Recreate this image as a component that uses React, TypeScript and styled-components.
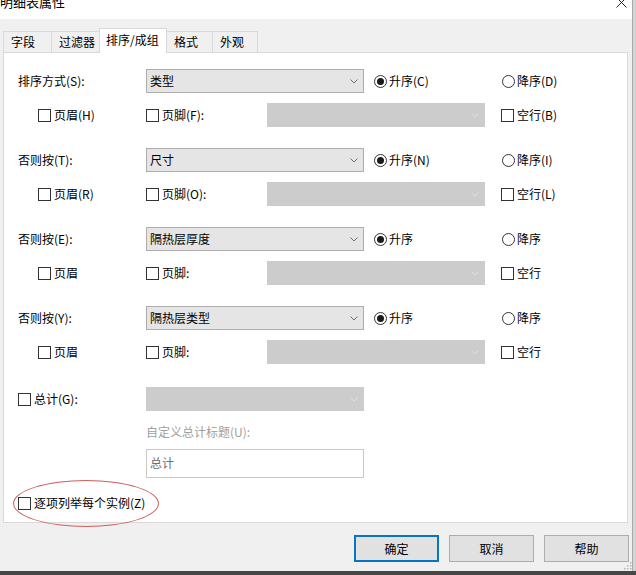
import React from 'react'
import styled, { createGlobalStyle, css } from 'styled-components'

const GlobalStyle = createGlobalStyle`
  html, body {
    margin: 0;
    padding: 0;
    background: #e6e6e6;
  }
  * {
    box-sizing: border-box;
  }
`

const FONT = `"Noto Sans CJK SC", "Noto Sans", "Liberation Sans", sans-serif`

const Screen = styled.div`
  width: 636px;
  height: 575px;
  background: #d4d4d4;
  border-bottom: 4px solid #474747;
  overflow: hidden;
  font-family: ${FONT};
  font-size: 12px;
  line-height: 16px;
  color: #000;
`

const Window = styled.div`
  width: 633px;
  height: 571px;
  background: #f0f0f0;
  border-right: 1px solid #a9a9a9;
  display: flex;
  flex-direction: column;
  position: relative;
`

const TitleBar = styled.div`
  height: 19px;
  background: #fff;
  display: flex;
  justify-content: space-between;
  align-items: flex-start;
  overflow: hidden;
`

const TitleText = styled.div`
  font-size: 13px;
  line-height: 13px;
  margin-top: -5px;
  color: #000;
`

const CloseIcon = styled.svg`
  margin-top: -3px;
  margin-right: 5px;
`

const TabStrip = styled.div`
  margin-top: 9px;
  height: 24px;
  padding-left: 3px;
  display: flex;
  align-items: flex-end;
  position: relative;
  z-index: 1;
`

const Tab = styled.div<{ $w: number; $active?: boolean }>`
  width: ${(p) => p.$w}px;
  height: 21px;
  border: 1px solid #d9d9d9;
  border-bottom: none;
  border-left-width: 0;
  background: #f0f0f0;
  display: flex;
  align-items: center;
  padding-left: 7px;
  line-height: 16px;
  &:first-child {
    border-left-width: 1px;
  }
  ${(p) =>
    p.$active &&
    css`
      height: 25px;
      margin-bottom: -1px;
      background: #fff;
      border-left-width: 1px;
      margin-left: -1px;
      padding-left: 6px;
      padding-bottom: 3px;
    `}
`

const Panel = styled.div`
  position: relative;
  margin: 0 4px 0 3px;
  height: 471px;
  background: #fff;
  border: 1px solid #d9d9d9;
  padding: 16px 0 0 14px;
  display: flex;
  flex-direction: column;
`

const Row = styled.div<{ $mt?: number; $indent?: number }>`
  display: flex;
  align-items: center;
  height: 24px;
  margin-top: ${(p) => p.$mt ?? 0}px;
  padding-left: ${(p) => p.$indent ?? 0}px;
`

const Label = styled.div<{ $w?: number; $disabled?: boolean }>`
  width: ${(p) => (p.$w ? `${p.$w}px` : 'auto')};
  flex-shrink: 0;
  white-space: nowrap;
  color: ${(p) => (p.$disabled ? '#a0a0a0' : '#000')};
`

const ComboBox = styled.div<{ $disabled?: boolean }>`
  width: 218px;
  height: 24px;
  flex-shrink: 0;
  background: ${(p) => (p.$disabled ? '#cccccc' : '#e5e5e5')};
  border: 1px solid ${(p) => (p.$disabled ? '#cccccc' : '#adadad')};
  display: flex;
  align-items: center;
  justify-content: space-between;
  padding: 0 5px 0 3px;
`

const Spacer = styled.div<{ $w: number }>`
  width: ${(p) => p.$w}px;
  flex-shrink: 0;
`

const Option = styled.div<{ $w?: number }>`
  width: ${(p) => (p.$w ? `${p.$w}px` : 'auto')};
  flex-shrink: 0;
  display: flex;
  align-items: center;
  white-space: nowrap;
`

const RadioCircle = styled.span<{ $checked?: boolean }>`
  width: 13px;
  height: 13px;
  border: 1px solid #333;
  border-radius: 50%;
  margin-right: 2px;
  display: flex;
  align-items: center;
  justify-content: center;
  &::after {
    content: '';
    display: ${(p) => (p.$checked ? 'block' : 'none')};
    width: 7px;
    height: 7px;
    border-radius: 50%;
    background: #1a1a1a;
  }
`

const CheckSquare = styled.span`
  width: 13px;
  height: 13px;
  border: 1px solid #333;
  background: #fff;
  margin-right: 3px;
  flex-shrink: 0;
`

const TextBox = styled.div`
  width: 218px;
  height: 29px;
  margin-top: 9px;
  margin-left: 128px;
  border: 1px solid #c8c8c8;
  padding: 5px 0 0 3px;
  color: #6d6d6d;
`

const Annotation = styled.div`
  position: absolute;
  left: 9px;
  top: 427px;
  width: 146px;
  height: 47px;
  border: 1px solid #cf5e5e;
  border-radius: 50%;
  pointer-events: none;
`

const Footer = styled.div`
  display: flex;
  justify-content: flex-end;
  gap: 10px;
  padding: 12px 3px 0 0;
`

const Button = styled.div<{ $default?: boolean }>`
  width: 85px;
  height: 27px;
  background: #e1e1e1;
  border: 1px solid #adadad;
  display: flex;
  align-items: center;
  justify-content: center;
  ${(p) =>
    p.$default &&
    css`
      border: 2px solid #0a74c4;
    `}
`

const Grip = styled.svg`
  position: absolute;
  right: 0;
  bottom: 1px;
`

const Chevron = ({ disabled }: { disabled?: boolean }) => (
  <svg width="8" height="5" viewBox="0 0 8 5">
    <path
      d="M0.5 0.5 L4 4 L7.5 0.5"
      fill="none"
      stroke={disabled ? '#dedede' : '#707070'}
      strokeWidth="1"
    />
  </svg>
)

const Radio = ({ label, checked, w }: { label: string; checked?: boolean; w?: number }) => (
  <Option $w={w}>
    <RadioCircle $checked={checked} />
    {label}
  </Option>
)

const Check = ({ label, w }: { label: string; w?: number }) => (
  <Option $w={w}>
    <CheckSquare />
    {label}
  </Option>
)

type SortGroup = {
  label: string
  field: string
  asc: string
  desc: string
  header: string
  footer: string
  blank: string
}

const groups: SortGroup[] = [
  { label: '排序方式(S):', field: '类型', asc: '升序(C)', desc: '降序(D)', header: '页眉(H)', footer: '页脚(F):', blank: '空行(B)' },
  { label: '否则按(T):', field: '尺寸', asc: '升序(N)', desc: '降序(I)', header: '页眉(R)', footer: '页脚(O):', blank: '空行(L)' },
  { label: '否则按(E):', field: '隔热层厚度', asc: '升序', desc: '降序', header: '页眉', footer: '页脚:', blank: '空行' },
  { label: '否则按(Y):', field: '隔热层类型', asc: '升序', desc: '降序', header: '页眉', footer: '页脚:', blank: '空行' },
]

const tabs = [
  { name: '字段', w: 49 },
  { name: '过滤器', w: 48 },
  { name: '排序/成组', w: 68, active: true },
  { name: '格式', w: 46 },
  { name: '外观', w: 45 },
]

export default function App() {
  return (
    <>
      <GlobalStyle />
      <Screen>
        <Window>
          <TitleBar>
            <TitleText>明细表属性</TitleText>
            <CloseIcon width="11" height="11" viewBox="0 0 11 11">
              <path d="M0.5 0.5 L10.5 10.5 M10.5 0.5 L0.5 10.5" stroke="#222" strokeWidth="1" />
            </CloseIcon>
          </TitleBar>

          <TabStrip>
            {tabs.map((t) => (
              <Tab key={t.name} $w={t.w} $active={t.active}>
                {t.name}
              </Tab>
            ))}
          </TabStrip>

          <Panel>
            {groups.map((g, i) => (
              <React.Fragment key={i}>
                <Row $mt={i === 0 ? 0 : 21}>
                  <Label $w={128}>{g.label}</Label>
                  <ComboBox>
                    {g.field}
                    <Chevron />
                  </ComboBox>
                  <Spacer $w={10} />
                  <Radio label={g.asc} checked w={128} />
                  <Radio label={g.desc} />
                </Row>
                <Row $mt={10} $indent={20}>
                  <Check label={g.header} w={108} />
                  <Check label={g.footer} w={121} />
                  <ComboBox $disabled>
                    <span />
                    <Chevron disabled />
                  </ComboBox>
                  <Spacer $w={16} />
                  <Check label={g.blank} />
                </Row>
              </React.Fragment>
            ))}

            <Row $mt={23}>
              <Check label="总计(G):" w={128} />
              <ComboBox $disabled>
                <span />
                <Chevron disabled />
              </ComboBox>
            </Row>
            <Row $mt={13} style={{ height: 16 }}>
              <Spacer $w={128} />
              <Label $disabled>自定义总计标题(U):</Label>
            </Row>
            <TextBox>总计</TextBox>
            <Row $mt={17} style={{ height: 16 }}>
              <Check label="逐项列举每个实例(Z)" />
            </Row>

            <Annotation />
          </Panel>

          <Footer>
            <Button $default>确定</Button>
            <Button>取消</Button>
            <Button>帮助</Button>
          </Footer>

          <Grip width="8" height="8" viewBox="0 0 8 8">
            <rect x="6" y="0" width="1.5" height="1.5" fill="#b8b8b8" />
            <rect x="3" y="3" width="1.5" height="1.5" fill="#b8b8b8" />
            <rect x="6" y="3" width="1.5" height="1.5" fill="#b8b8b8" />
            <rect x="0" y="6" width="1.5" height="1.5" fill="#b8b8b8" />
            <rect x="3" y="6" width="1.5" height="1.5" fill="#b8b8b8" />
            <rect x="6" y="6" width="1.5" height="1.5" fill="#b8b8b8" />
          </Grip>
        </Window>
      </Screen>
    </>
  )
}
